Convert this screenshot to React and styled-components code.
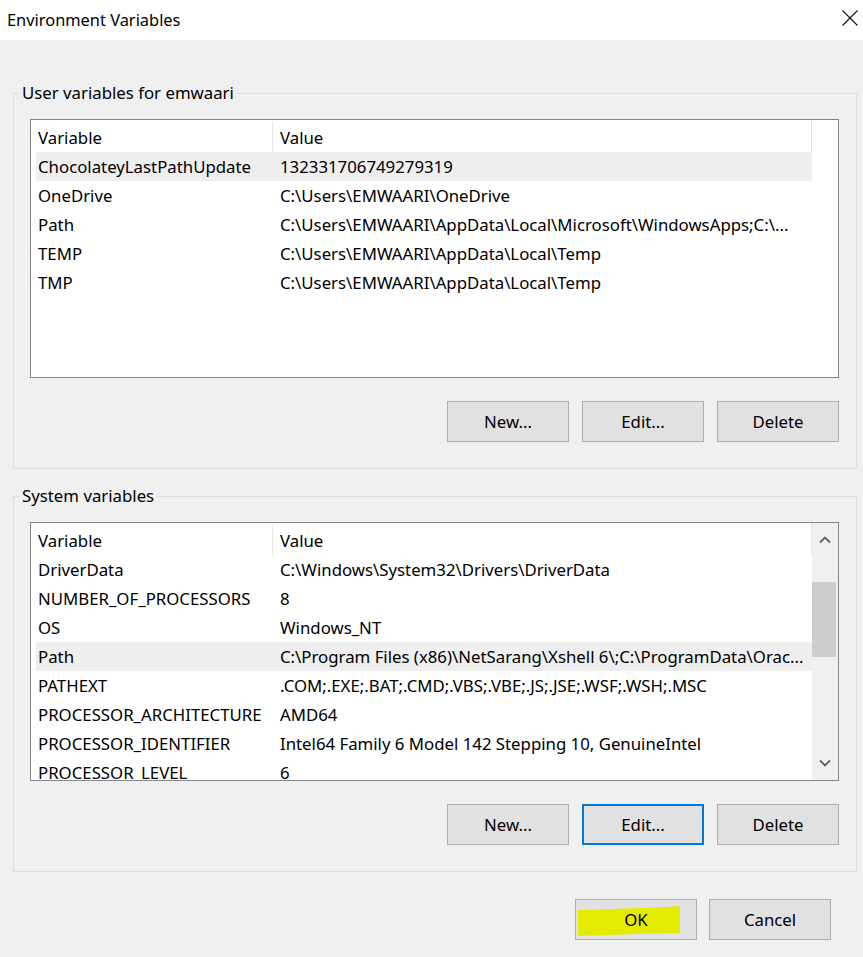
import styled, { createGlobalStyle } from "styled-components";

const GlobalStyle = createGlobalStyle`
  html, body {
    margin: 0;
    padding: 0;
    background: #f0f0f0;
  }
  body {
    font-family: "Noto Sans", "Open Sans", sans-serif;
    color: #000;
  }
`;

const userVars = [
  { name: "ChocolateyLastPathUpdate", value: "132331706749279319", selected: true },
  { name: "OneDrive", value: "C:\\Users\\EMWAARI\\OneDrive" },
  { name: "Path", value: "C:\\Users\\EMWAARI\\AppData\\Local\\Microsoft\\WindowsApps;C:\\..." },
  { name: "TEMP", value: "C:\\Users\\EMWAARI\\AppData\\Local\\Temp" },
  { name: "TMP", value: "C:\\Users\\EMWAARI\\AppData\\Local\\Temp" },
];

const systemVars = [
  { name: "DriverData", value: "C:\\Windows\\System32\\Drivers\\DriverData" },
  { name: "NUMBER_OF_PROCESSORS", value: "8" },
  { name: "OS", value: "Windows_NT" },
  { name: "Path", value: "C:\\Program Files (x86)\\NetSarang\\Xshell 6\\;C:\\ProgramData\\Orac...", selected: true },
  { name: "PATHEXT", value: ".COM;.EXE;.BAT;.CMD;.VBS;.VBE;.JS;.JSE;.WSF;.WSH;.MSC" },
  { name: "PROCESSOR_ARCHITECTURE", value: "AMD64" },
  { name: "PROCESSOR_IDENTIFIER", value: "Intel64 Family 6 Model 142 Stepping 10, GenuineIntel" },
  { name: "PROCESSOR_LEVEL", value: "6" },
];

const VarList = ({ rows, scroll }) => (
  <ListBox>
    <ListInner>
      <HeaderRow>
        <NameCell header>Variable</NameCell>
        <ValueCell>Value</ValueCell>
      </HeaderRow>
      {rows.map((r) => (
        <Row key={r.name + r.value} selected={r.selected}>
          <NameCell>{r.name}</NameCell>
          <ValueCell>{r.value}</ValueCell>
        </Row>
      ))}
    </ListInner>
    <Gutter scroll={scroll}>
      {scroll && (
        <>
          <ArrowBtn>
            <svg width="12" height="8" viewBox="0 0 12 8">
              <path d="M1 6.5 L6 1.5 L11 6.5" fill="none" stroke="#606060" strokeWidth="1.8" />
            </svg>
          </ArrowBtn>
          <Track>
            <Thumb />
          </Track>
          <ArrowBtn>
            <svg width="12" height="8" viewBox="0 0 12 8">
              <path d="M1 1.5 L6 6.5 L11 1.5" fill="none" stroke="#606060" strokeWidth="1.8" />
            </svg>
          </ArrowBtn>
        </>
      )}
    </Gutter>
  </ListBox>
);

export default function App() {
  return (
    <>
      <GlobalStyle />
      <Window>
        <TitleBar>
          <Title>Environment Variables</Title>
          <CloseBtn>
            <svg width="16" height="16" viewBox="0 0 16 16">
              <path d="M0.5 0.5 L15.5 15.5 M15.5 0.5 L0.5 15.5" stroke="#111" strokeWidth="1.1" />
            </svg>
          </CloseBtn>
        </TitleBar>

        <Body>
          <Group>
            <Legend>User variables for emwaari</Legend>
            <VarList rows={userVars} />
            <ButtonRow>
              <Button>New...</Button>
              <Button>Edit...</Button>
              <Button>Delete</Button>
            </ButtonRow>
          </Group>

          <Group>
            <Legend>System variables</Legend>
            <VarList rows={systemVars} scroll />
            <ButtonRow>
              <Button>New...</Button>
              <Button focused>Edit...</Button>
              <Button>Delete</Button>
            </ButtonRow>
          </Group>

          <DialogButtons>
            <Button>
              <Highlight viewBox="0 0 104 30" preserveAspectRatio="none">
                <path d="M1 4 C30 3.5 70 2 103 0 L103 27 C70 27.5 30 29 1 30 Z" fill="#e3ec00" />
              </Highlight>
              <Label>OK</Label>
            </Button>
            <Button>Cancel</Button>
          </DialogButtons>
        </Body>
      </Window>
    </>
  );
}

const Window = styled.div`
  width: 863px;
  height: 957px;
  display: flex;
  flex-direction: column;
  background: #f0f0f0;
  overflow: hidden;
`;

const TitleBar = styled.div`
  height: 40px;
  background: #fff;
  display: flex;
  align-items: center;
  justify-content: space-between;
  padding: 0 5px 1px 7px;
  box-sizing: border-box;
`;

const Title = styled.div`
  font-size: 16.4px;
  color: #000;
`;

const CloseBtn = styled.div`
  display: flex;
  align-items: center;
  margin-top: -4px;
`;

const Body = styled.div`
  flex: 1;
  display: flex;
  flex-direction: column;
  gap: 17px;
  padding: 43px 6px 0 13px;
`;

const Group = styled.fieldset`
  margin: 0;
  padding: 16px 17px 26px 16px;
  border: 1px solid #dcdcdc;
  display: flex;
  flex-direction: column;
  min-width: 0;
`;

const Legend = styled.legend`
  font-size: 16.8px;
  line-height: 20px;
  padding: 0 3px;
  margin-left: -11px;
`;

const ListBox = styled.div`
  height: 259px;
  border: 1px solid #828790;
  background: #fff;
  display: flex;
  box-sizing: border-box;
  overflow: hidden;
`;

const ListInner = styled.div`
  flex: 1;
  min-width: 0;
  padding-left: 5px;
  overflow: hidden;
`;

const HeaderRow = styled.div`
  height: 32px;
  display: flex;
  align-items: center;
  padding-top: 2px;
  box-sizing: border-box;
  border-right: 1px solid #e5e5e5;
`;

const Row = styled.div`
  height: 29px;
  display: flex;
  align-items: center;
  background: ${(p) => (p.selected ? "#efefef" : "#fff")};
`;

const NameCell = styled.div`
  width: 234px;
  flex-shrink: 0;
  padding-left: 2px;
  font-size: 16.8px;
  white-space: nowrap;
  overflow: hidden;
  align-self: stretch;
  display: flex;
  align-items: center;
  border-right: ${(p) => (p.header ? "1px solid #e5e5e5" : "1px solid transparent")};
`;

const ValueCell = styled.div`
  flex: 1;
  min-width: 0;
  padding-left: 7px;
  font-size: 16.8px;
  white-space: nowrap;
  overflow: hidden;
`;

const Gutter = styled.div`
  width: 26px;
  flex-shrink: 0;
  display: flex;
  flex-direction: column;
  background: ${(p) => (p.scroll ? "#f0f0f0" : "#fff")};
`;

const ArrowBtn = styled.div`
  height: 34px;
  display: flex;
  align-items: center;
  justify-content: center;
`;

const Track = styled.div`
  flex: 1;
  padding-top: 25px;
`;

const Thumb = styled.div`
  height: 75px;
  width: 24px;
  background: #cdcdcd;
`;

const ButtonRow = styled.div`
  display: flex;
  justify-content: flex-end;
  gap: 13px;
  margin-top: 23px;
`;

const DialogButtons = styled.div`
  display: flex;
  justify-content: flex-end;
  gap: 12px;
  margin-top: 10px;
  padding-right: 26px;
`;

const Button = styled.div`
  position: relative;
  width: 122px;
  height: 41px;
  box-sizing: border-box;
  display: flex;
  align-items: center;
  justify-content: center;
  background: #e1e1e1;
  border: ${(p) => (p.focused ? "2px solid #0078d7" : "1px solid #adadad")};
  font-size: 16.8px;
  color: #000;
`;

const Highlight = styled.svg`
  position: absolute;
  left: 1px;
  top: 6px;
  width: 104px;
  height: 30px;
`;

const Label = styled.span`
  position: relative;
`;
